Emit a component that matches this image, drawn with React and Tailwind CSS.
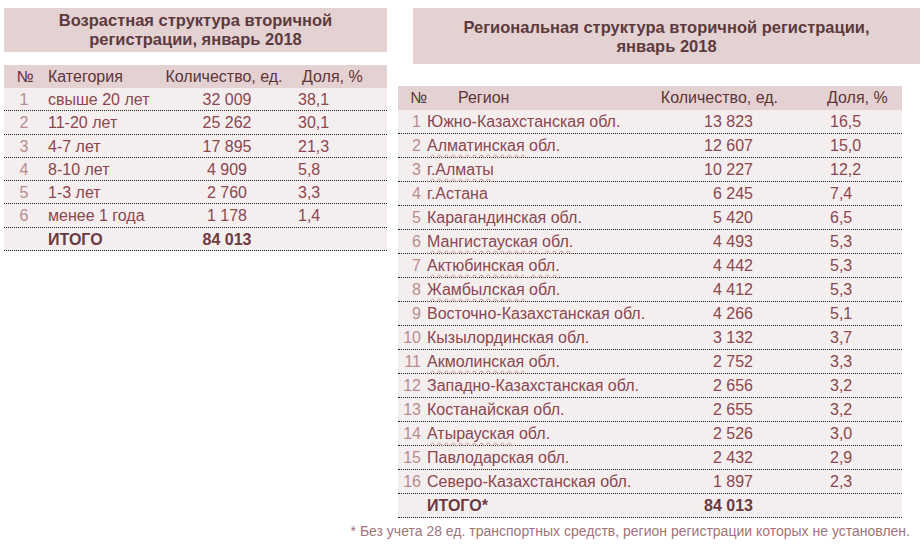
import React from "react"

const ageRows = [
  ["1", "свыше 20 лет", "32 009", "38,1"],
  ["2", "11-20 лет", "25 262", "30,1"],
  ["3", "4-7 лет", "17 895", "21,3"],
  ["4", "8-10 лет", "4 909", "5,8"],
  ["5", "1-3 лет", "2 760", "3,3"],
  ["6", "менее 1 года", "1 178", "1,4"],
]

// words flagged by the spell checker in the source slide
const regionRows = [
  ["1", [["Южно-Казахстанская обл.", false]], "13 823", "16,5"],
  ["2", [["Алматинская", true], [" обл.", false]], "12 607", "15,0"],
  ["3", [["г.Алматы", true]], "10 227", "12,2"],
  ["4", [["г.Астана", false]], "6 245", "7,4"],
  ["5", [["Карагандинская обл.", false]], "5 420", "6,5"],
  ["6", [["Мангистауская", true], [" ", false], ["обл.", true]], "4 493", "5,3"],
  ["7", [["Актюбинская", true], [" ", false], ["обл.", true]], "4 442", "5,3"],
  ["8", [["Жамбылская", true], [" обл.", false]], "4 412", "5,3"],
  ["9", [["Восточно-Казахстанская обл.", false]], "4 266", "5,1"],
  ["10", [["Кызылординская обл.", false]], "3 132", "3,7"],
  ["11", [["Акмолинская", true], [" обл.", false]], "2 752", "3,3"],
  ["12", [["Западно-Казахстанская обл.", false]], "2 656", "3,2"],
  ["13", [["Костанайская обл.", false]], "2 655", "3,2"],
  ["14", [["Атырауская", true], [" обл.", false]], "2 526", "3,0"],
  ["15", [["Павлодарская обл.", false]], "2 432", "2,9"],
  ["16", [["Северо-Казахстанская обл.", false]], "1 897", "2,3"],
]

function Title({ children, className }) {
  return (
    <div
      className={`bg-[#e4d2d2] flex flex-col items-center justify-center text-[16.5px] leading-[19px] font-bold text-[#5c3a3e] ${className}`}
    >
      {children}
    </div>
  )
}

function AgeTable() {
  return (
    <div className="mt-[13px] text-[16px] text-[#8a4750]">
      <div className="h-[23px] bg-[#e4d2d2] grid grid-cols-[40px_116px_128px_1fr] items-center text-[#5e3439]">
        <div className="text-center pl-[2px]">№</div>
        <div className="pl-[4px]">Категория</div>
        <div className="text-center">Количество, ед.</div>
        <div className="pl-[14px]">Доля, %</div>
      </div>
      {ageRows.map(([n, cat, qty, pct]) => (
        <div
          key={n}
          className="h-[23.3px] bg-[#f5eeee] border-b border-dotted border-[#222] grid grid-cols-[40px_116px_128px_1fr] items-center"
        >
          <div className="text-center text-[#b58d90]">{n}</div>
          <div className="pl-[4px]">{cat}</div>
          <div className="text-center pl-[6px]">{qty}</div>
          <div className="pl-[10px]">{pct}</div>
        </div>
      ))}
      <div className="h-[23.3px] bg-[#f5eeee] border-b border-dotted border-[#222] grid grid-cols-[40px_116px_128px_1fr] items-center text-[#6b3a42]">
        <div />
        <div className="pl-[4px] font-bold">ИТОГО</div>
        <div className="text-center pl-[6px] font-bold">84 013</div>
        <div />
      </div>
    </div>
  )
}

function RegionTable() {
  return (
    <div className="mt-[22px] w-[504px] text-[16px] text-[#8a4750]">
      <div className="h-[24px] bg-[#e4d2d2] grid grid-cols-[23px_229px_103px_1fr] items-center text-[#5e3439]">
        <div className="pl-[12px]">№</div>
        <div className="pl-[37px]">Регион</div>
        <div className="text-right whitespace-nowrap">
          <span className="mr-[-25px]">Количество, ед.</span>
        </div>
        <div className="pl-[74px]">Доля, %</div>
      </div>
      {regionRows.map(([n, parts, qty, pct]) => (
        <div
          key={n}
          className="h-[24px] bg-[#f5eeee] border-b border-dotted border-[#222] grid grid-cols-[23px_229px_103px_1fr] items-center"
        >
          <div className="text-right text-[#b58d90]">{n}</div>
          <div className="pl-[6px] whitespace-nowrap">
            {parts.map(([t, flagged], i) => (
              <span
                key={i}
                className={flagged ? "underline decoration-wavy decoration-[#c29a9d] decoration-[1px] underline-offset-[3px]" : ""}
              >
                {t}
              </span>
            ))}
          </div>
          <div className="text-right">{qty}</div>
          <div className="pl-[77px]">{pct}</div>
        </div>
      ))}
      <div className="h-[24px] bg-[#f5eeee] border-b border-dotted border-[#222] grid grid-cols-[23px_229px_103px_1fr] items-center text-[#6b3a42]">
        <div />
        <div className="pl-[6px] font-bold">ИТОГО*</div>
        <div className="text-right font-bold">84 013</div>
        <div />
      </div>
    </div>
  )
}

export default function App() {
  return (
    <div
      className="w-[921px] h-[553px] bg-white flex flex-col overflow-hidden"
      style={{ fontFamily: '"Liberation Sans", Arial, sans-serif' }}
    >
      <div className="flex items-start">
        <div className="ml-[4px] mt-[8px] w-[383px] shrink-0 flex flex-col">
          <Title className="h-[44px]">
            <div>Возрастная структура вторичной</div>
            <div>регистрации, январь 2018</div>
          </Title>
          <AgeTable />
        </div>

        <div className="ml-[11px] mt-[8px] w-[523px] shrink-0 flex flex-col">
          <Title className="h-[56px] ml-[15px] mr-[1px] pt-[2px]">
            <div>Региональная структура вторичной регистрации,</div>
            <div>январь 2018</div>
          </Title>
          <RegionTable />
        </div>
      </div>

      <div className="mt-[4px] pr-[11px] text-right text-[14px] leading-[18px] text-[#a07479] whitespace-nowrap">
        * Без учета 28 ед. транспортных средств, регион регистрации которых не установлен.
      </div>
    </div>
  )
}
